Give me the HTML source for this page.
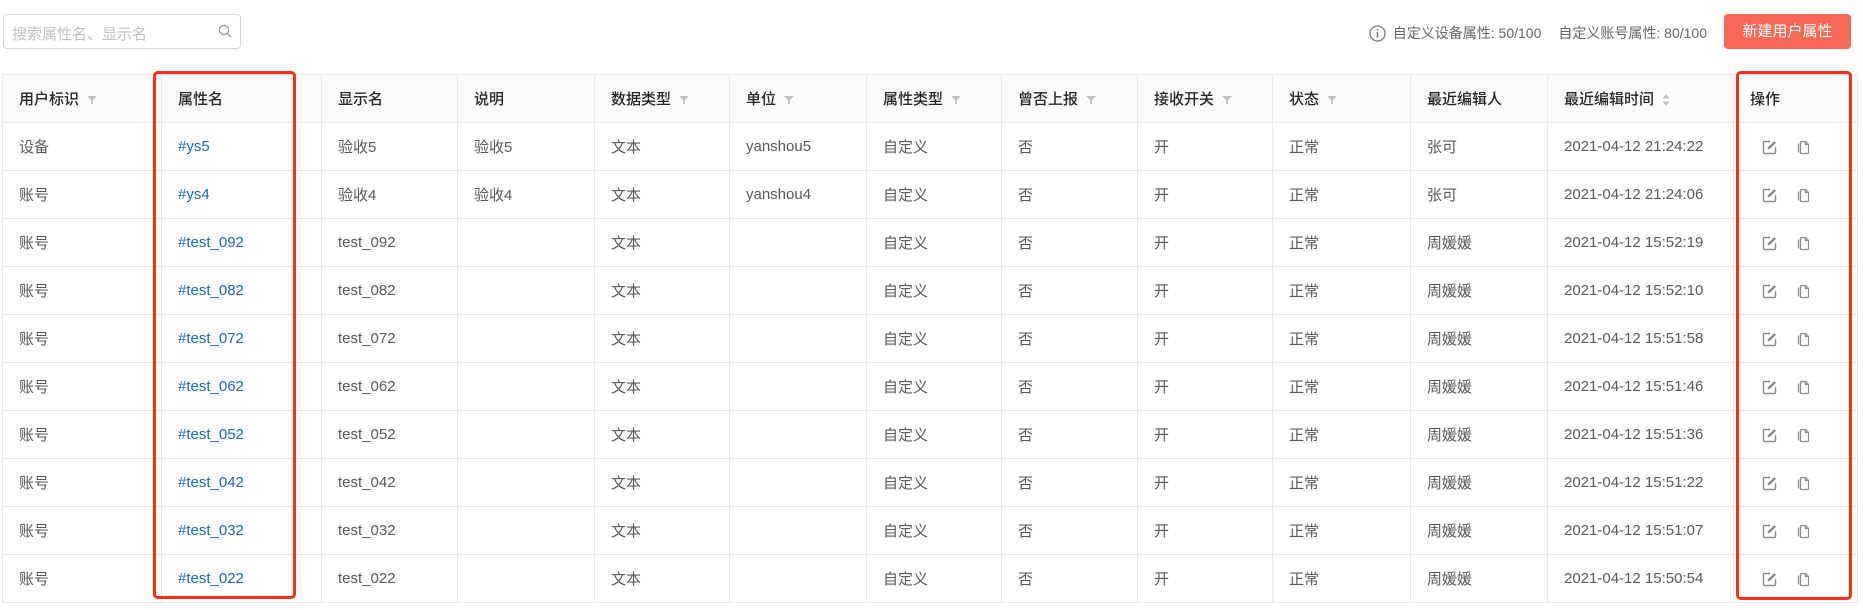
<!DOCTYPE html>
<html><head><meta charset="utf-8"><style>
*{box-sizing:border-box;margin:0;padding:0}
body{width:1863px;height:610px;background:#fff;font-family:"Liberation Sans","Noto Sans CJK SC",sans-serif;position:relative;overflow:hidden;color:#595959}
.search{position:absolute;left:3px;top:14px;width:238px;height:35px;border:1px solid #d9d9d9;border-radius:4px;font-size:15px;color:#bfbfbf;padding:8px 0 0 8px}
.search svg{position:absolute;right:8px;top:9px}
.info{position:absolute;right:156px;top:23px;font-size:14px;color:#666;display:flex;align-items:center;gap:7px;white-space:nowrap}
.btn{position:absolute;left:1724px;top:14px;width:127px;height:35px;background:#f96757;border-radius:4px;color:#fff;font-size:15px;text-align:center;line-height:35px}
table{position:absolute;left:2px;top:74px;border-collapse:collapse;font-size:15px;table-layout:fixed;width:1855px}
td,th{border:1px solid #e8e8e8;height:48px;padding:0 0 0 16px;text-align:left;font-weight:normal;white-space:nowrap}
th{background:#fafafa;color:#262626;font-weight:500}
a{color:#1668c4;text-decoration:none}
.f{display:inline-block;margin-left:8px;vertical-align:middle}
.red{position:absolute;border:3px solid #ff2a10;border-radius:5px}
.ops svg{vertical-align:middle}
</style></head><body>
<div class="search">搜索属性名、显示名<svg width="14" height="14" viewBox="0 0 14 14"><circle cx="6" cy="6" r="4.6" fill="none" stroke="#999" stroke-width="1.3"/><path d="M9.5 9.5L13 13" stroke="#999" stroke-width="1.3"/></svg></div>
<div class="info"><svg width="17" height="17" viewBox="0 0 17 17"><circle cx="8.5" cy="8.5" r="7.5" fill="none" stroke="#777" stroke-width="1.3"/><path d="M8.5 7v5.5M8.5 4.3v1.4" stroke="#777" stroke-width="1.5"/></svg><span>自定义设备属性: 50/100</span><span style="margin-left:10px">自定义账号属性: 80/100</span></div>
<div class="btn">新建用户属性</div>
<table>
<colgroup><col style="width:159px"><col style="width:160px"><col style="width:136px"><col style="width:137px"><col style="width:135px"><col style="width:137px"><col style="width:135px"><col style="width:136px"><col style="width:135px"><col style="width:138px"><col style="width:137px"><col style="width:186px"><col style="width:124px"></colgroup>
<tr><th>用户标识<svg class="f" width="10" height="10" viewBox="0 0 10 10"><path d="M0 1h10L6 5v4H4V5z" fill="#bfbfbf"/></svg></th><th>属性名</th><th>显示名</th><th>说明</th><th>数据类型<svg class="f" width="10" height="10" viewBox="0 0 10 10"><path d="M0 1h10L6 5v4H4V5z" fill="#bfbfbf"/></svg></th><th>单位<svg class="f" width="10" height="10" viewBox="0 0 10 10"><path d="M0 1h10L6 5v4H4V5z" fill="#bfbfbf"/></svg></th><th>属性类型<svg class="f" width="10" height="10" viewBox="0 0 10 10"><path d="M0 1h10L6 5v4H4V5z" fill="#bfbfbf"/></svg></th><th>曾否上报<svg class="f" width="10" height="10" viewBox="0 0 10 10"><path d="M0 1h10L6 5v4H4V5z" fill="#bfbfbf"/></svg></th><th>接收开关<svg class="f" width="10" height="10" viewBox="0 0 10 10"><path d="M0 1h10L6 5v4H4V5z" fill="#bfbfbf"/></svg></th><th>状态<svg class="f" width="10" height="10" viewBox="0 0 10 10"><path d="M0 1h10L6 5v4H4V5z" fill="#bfbfbf"/></svg></th><th>最近编辑人</th><th>最近编辑时间<svg class="f" width="8" height="14" viewBox="0 0 8 14"><path d="M4 1L7.5 5.5h-7zM4 13L.5 8.5h7z" fill="#bfbfbf"/></svg></th><th>操作</th></tr>
<tr><td>设备</td><td><a>#ys5</a></td><td>验收5</td><td>验收5</td><td>文本</td><td>yanshou5</td><td>自定义</td><td>否</td><td>开</td><td>正常</td><td>张可</td><td>2021-04-12 21:24:22</td><td class="ops"></td></tr>
<tr><td>账号</td><td><a>#ys4</a></td><td>验收4</td><td>验收4</td><td>文本</td><td>yanshou4</td><td>自定义</td><td>否</td><td>开</td><td>正常</td><td>张可</td><td>2021-04-12 21:24:06</td><td class="ops"></td></tr>
<tr><td>账号</td><td><a>#test_092</a></td><td>test_092</td><td></td><td>文本</td><td></td><td>自定义</td><td>否</td><td>开</td><td>正常</td><td>周媛媛</td><td>2021-04-12 15:52:19</td><td class="ops"></td></tr>
<tr><td>账号</td><td><a>#test_082</a></td><td>test_082</td><td></td><td>文本</td><td></td><td>自定义</td><td>否</td><td>开</td><td>正常</td><td>周媛媛</td><td>2021-04-12 15:52:10</td><td class="ops"></td></tr>
<tr><td>账号</td><td><a>#test_072</a></td><td>test_072</td><td></td><td>文本</td><td></td><td>自定义</td><td>否</td><td>开</td><td>正常</td><td>周媛媛</td><td>2021-04-12 15:51:58</td><td class="ops"></td></tr>
<tr><td>账号</td><td><a>#test_062</a></td><td>test_062</td><td></td><td>文本</td><td></td><td>自定义</td><td>否</td><td>开</td><td>正常</td><td>周媛媛</td><td>2021-04-12 15:51:46</td><td class="ops"></td></tr>
<tr><td>账号</td><td><a>#test_052</a></td><td>test_052</td><td></td><td>文本</td><td></td><td>自定义</td><td>否</td><td>开</td><td>正常</td><td>周媛媛</td><td>2021-04-12 15:51:36</td><td class="ops"></td></tr>
<tr><td>账号</td><td><a>#test_042</a></td><td>test_042</td><td></td><td>文本</td><td></td><td>自定义</td><td>否</td><td>开</td><td>正常</td><td>周媛媛</td><td>2021-04-12 15:51:22</td><td class="ops"></td></tr>
<tr><td>账号</td><td><a>#test_032</a></td><td>test_032</td><td></td><td>文本</td><td></td><td>自定义</td><td>否</td><td>开</td><td>正常</td><td>周媛媛</td><td>2021-04-12 15:51:07</td><td class="ops"></td></tr>
<tr><td>账号</td><td><a>#test_022</a></td><td>test_022</td><td></td><td>文本</td><td></td><td>自定义</td><td>否</td><td>开</td><td>正常</td><td>周媛媛</td><td>2021-04-12 15:50:54</td><td class="ops"></td></tr>
</table>
<div class="red" style="left:153px;top:71px;width:143px;height:528px"></div>
<div class="red" style="left:1736px;top:71px;width:116px;height:529px"></div>
<script>
document.querySelectorAll('td.ops').forEach(function(td){td.style.paddingLeft='28px';td.innerHTML='<svg width="15" height="15" viewBox="0 0 15 15"><path d="M8 1.5H2.5a1 1 0 0 0-1 1v10a1 1 0 0 0 1 1h10a1 1 0 0 0 1-1V7" fill="none" stroke="#8c8c8c" stroke-width="1.4"/><path d="M5.5 9.5l.5-2.2L12.3 1l1.7 1.7L7.7 9z" fill="#8c8c8c"/></svg><svg style="margin-left:20px" width="13" height="15" viewBox="0 0 13 15"><path d="M4.5 1.5h4l3 3v8a1 1 0 0 1-1 1h-6a1 1 0 0 1-1-1v-10a1 1 0 0 1 1-1z" fill="none" stroke="#8c8c8c" stroke-width="1.3"/><path d="M1.5 3.5v9" stroke="#8c8c8c" stroke-width="1.3"/><path d="M8.5 1.5v3h3" fill="none" stroke="#8c8c8c" stroke-width="1.3"/></svg>';});
</script>
</body></html>
